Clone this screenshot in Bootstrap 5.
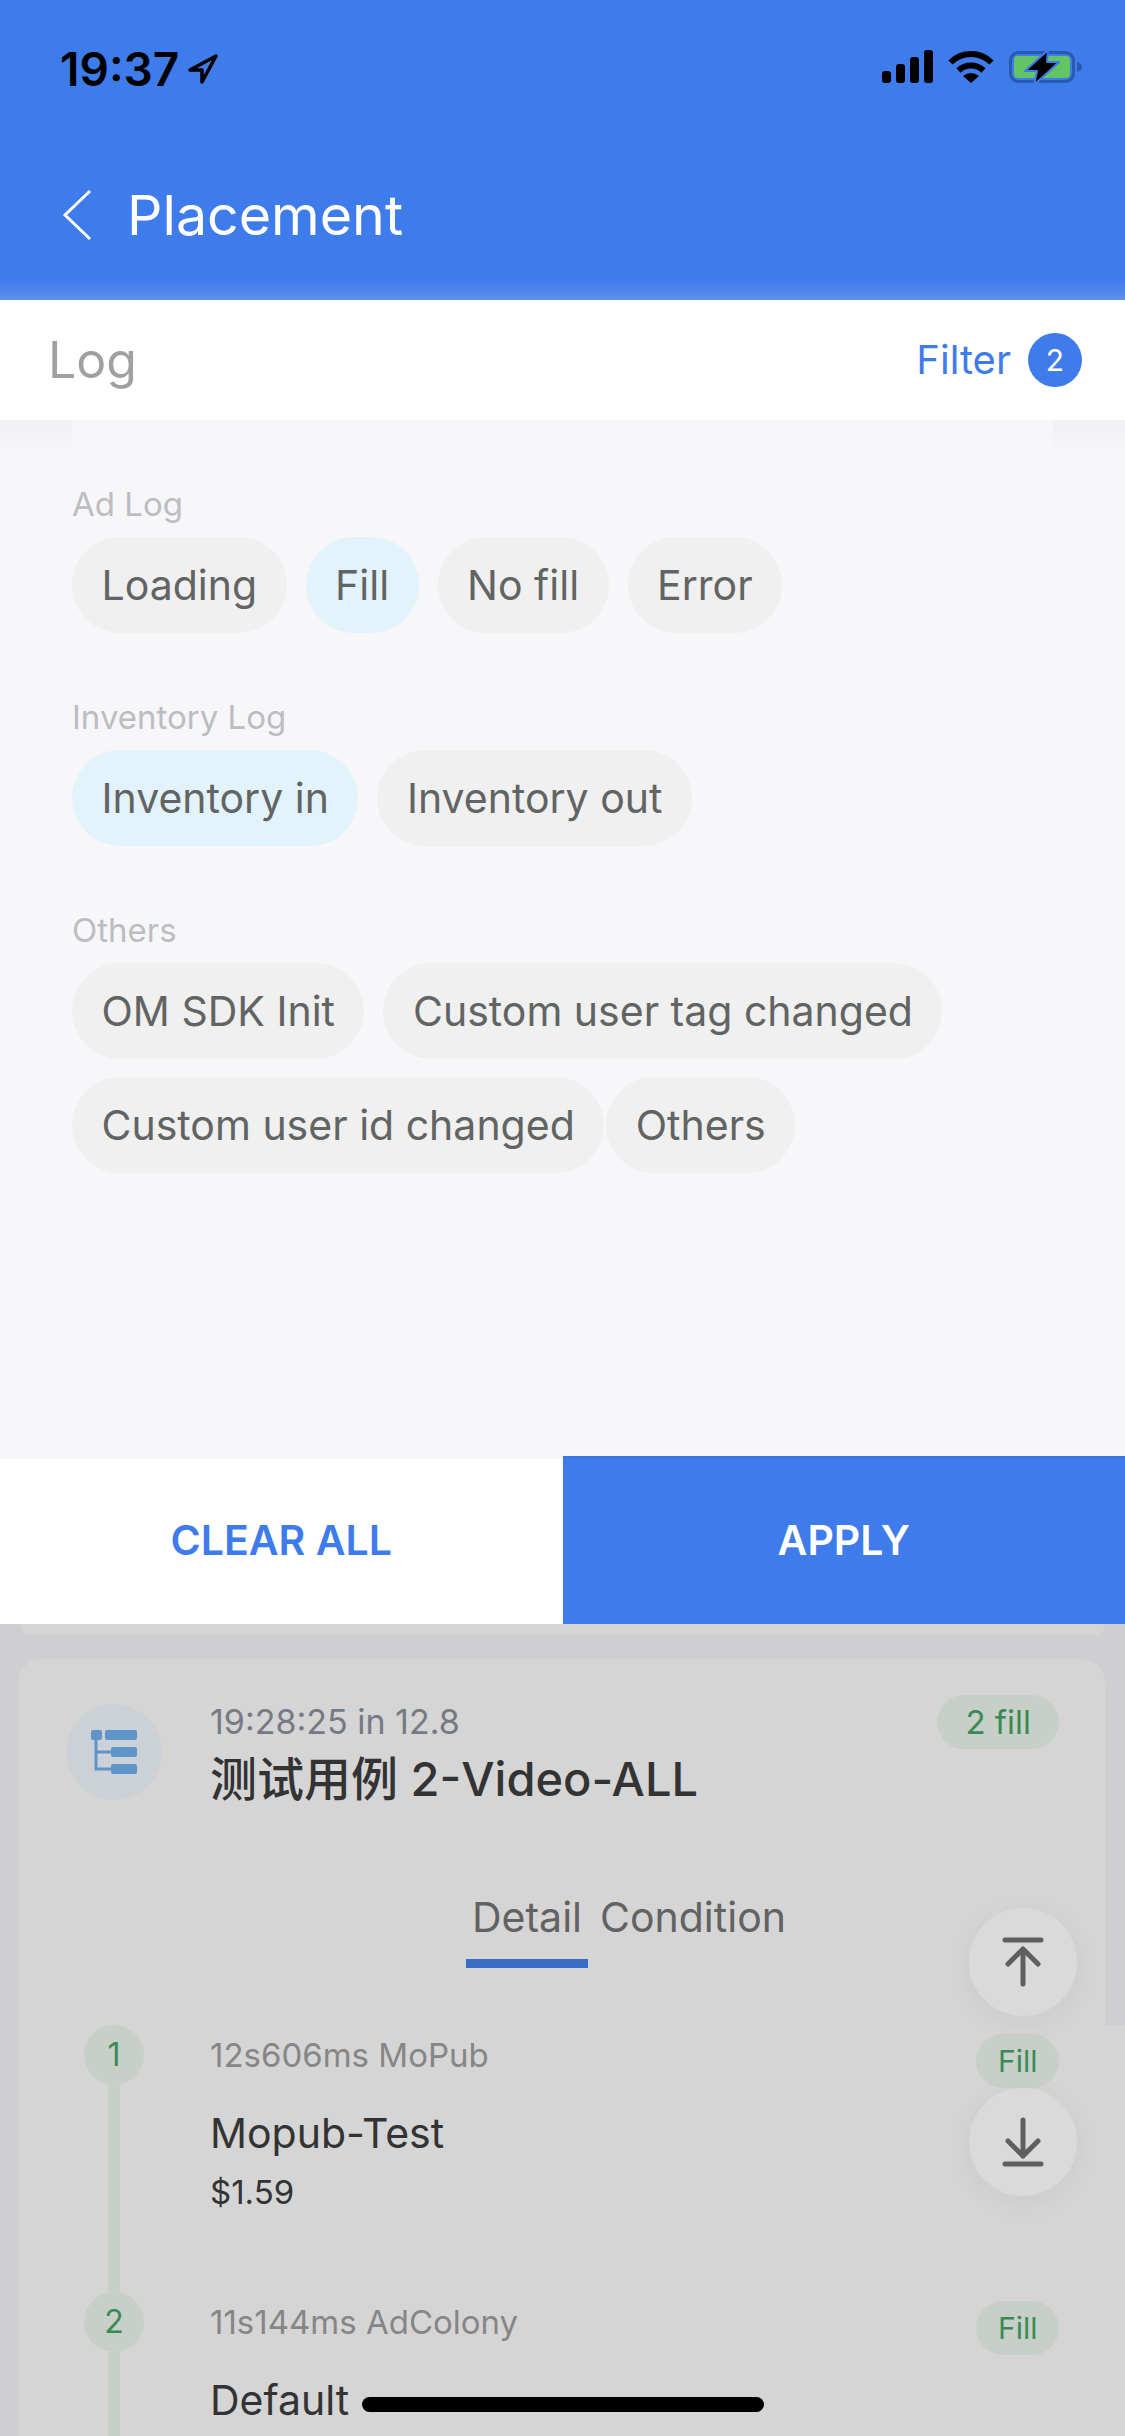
<!DOCTYPE html>
<html lang="en">
<head>
    <meta charset="UTF-8">
    <meta name="viewport" content="width=device-width, initial-scale=1.0">
    <title>Placement</title>
    <link href="https://cdn.jsdelivr.net/npm/bootstrap@5.3.0/dist/css/bootstrap.min.css" rel="stylesheet">
    <style>
        body { width: 1125px; height: 2436px; overflow: hidden; font-family: Inter, "Noto Sans CJK SC", sans-serif; background: #cfcfd1; }
        .app-head { height: 300px; background: linear-gradient(#3e7beb 280px, #5f90e8 300px); }
        .status-bar { height: 177px; padding: 46px 42px 0 60px; }
        .clock { font-size: 46px; line-height: 46px; font-weight: 600; color: #000; }
        .signal-icon { margin-right: 14px; }
        .wifi-icon { margin-right: 15px; }
        .head-nav { padding-left: 62px; gap: 35px; }
        .head-title { font-size: 55.500px; line-height: 76px; color: #fff; }
        .log-row { height: 120px; background: #fff; padding: 0 43px 0 48px; }
        .log-title { font-size: 50px; color: #a0a0a0; }
        .filter-link { font-size: 40px; color: #3e7beb; }
        .filter-count { width: 54px; height: 54px; margin-left: 17px; background: #3e7beb; color: #fff; font-size: 30px; }
        .filter-panel { height: 1036px; padding: 66px 72px 0; background:
            linear-gradient(#f1f1f4, #f7f7f9) left top / 72px 36px no-repeat,
            linear-gradient(#f1f1f4, #f7f7f9) right top / 72px 36px no-repeat,
            #f7f7f9; }
        .group-label { font-size: 33px; line-height: 36px; color: #bcbdc0; margin-bottom: 15px; }
        .chip-group { margin-bottom: 66px; }
        .chip-wrap { row-gap: 18px; column-gap: 19px; }
        .chip-item { height: 96px; padding: 2px 29.500px 0; border-radius: 48px; background: #eff0ef; color: #626463; font-size: 41px; }
        .chip-item.is-on { background: #e2f3fc; }
        .chip-tight { margin-right: -17px; }
        .panel-actions { height: 168px; }
        .panel-btn { width: 50%; border: 0; border-radius: 0; padding-top: 8px; font-size: 41px; font-weight: 600; box-shadow: inset 0 3px rgba(0,0,0,.04); }
        .btn-clear { background: #fff; color: #3e7beb; }
        .btn-apply { background: #3e7beb; color: #fff; }
        .log-under { height: 812px; overflow: hidden; padding: 0 20px 0 18px; background: linear-gradient(#d5d5d5, #d5d5d5) right bottom / 20px 411px no-repeat, #cfcfd1; }
        .prev-card { height: 11px; margin: 0 0 24px 2px; background: #d5d5d5; border-radius: 0 0 24px 24px; }
        .test-card { height: 777px; overflow: hidden; padding: 36px 46px 0 48px; background: #d5d5d5; border-radius: 24px 24px 0 0; }
        .tree-icon { width: 96px; height: 96px; margin-top: 9px; margin-right: 48px; }
        .test-time { font-size: 34px; line-height: 36px; color: #757a84; margin-top: 9px; }
        .test-name { font-size: 47px; line-height: 56px; font-weight: 500; color: #333; margin-top: 11px; white-space: nowrap; }
        .fill-tag { height: 54px; padding: 0 28px; border-radius: 27px; background: #c8cfc9; color: #3a8a54; font-size: 33px; line-height: 54px; }
        .tab-bar { margin-top: 87px; margin-left: 400px; gap: 6px; height: 74px; }
        .tab-item { font-size: 41px; line-height: 46px; color: #626262; padding: 0 6px; height: 74px; }
        .tab-item.is-on { border-bottom: 9px solid #3b6cc4; }
        .step-list { margin-top: 57px; margin-left: 18px; }
        .step-row { height: 267px; }
        .step-side { width: 60px; margin-right: 66px; }
        .step-num { width: 60px; height: 60px; background: #c8cfc9; color: #3a8a54; font-size: 32px; }
        .step-line { width: 12px; flex: 1; background: #c8cfc9; }
        .step-body { padding-top: 12px; }
        .step-meta { font-size: 33px; line-height: 36px; color: #868686; }
        .step-name { font-size: 41px; line-height: 50px; color: #333; margin-top: 35px; }
        .step-price { font-size: 33px; line-height: 36px; color: #333; margin-top: 16px; }
        .step-tag { margin-top: 9px; padding: 0 21.500px; font-size: 30px; }
        .float-btn { width: 108px; height: 108px; right: 48px; background: #dadada; box-shadow: 0 6px 30px rgba(0,0,0,.05); }
        .float-up { top: 1908px; }
        .float-down { top: 2088px; }
        .home-bar { left: 362px; top: 2397px; width: 402px; height: 15px; border-radius: 8px; background: #000; }
    </style>
</head>
<body class="position-relative">
    <header class="app-head">
        <div class="status-bar d-flex justify-content-between align-items-start">
            <div class="d-flex align-items-center gap-2">
                <span class="clock">19:37</span>
                <svg width="32" height="32" viewBox="0 0 32 32"><path d="M29 3 L3 17 H15 V29 Z" fill="none" stroke="#000" stroke-width="3.500" stroke-linejoin="round"/></svg>
            </div>
            <div class="d-flex align-items-start">
                <svg width="52" height="33" viewBox="0 0 52 33" class="signal-icon mt-1"><rect x="0" y="21" width="9" height="12" rx="3"/><rect x="14" y="14" width="9" height="19" rx="3"/><rect x="28" y="7" width="9" height="26" rx="3"/><rect x="42" y="0" width="9" height="33" rx="3"/></svg>
                <svg width="46" height="34" viewBox="0 0 46 34" class="wifi-icon mt-1"><path d="M2.500 12.500 A29 29 0 0 1 43.500 12.500" fill="none" stroke="#000" stroke-width="6"/><path d="M10.500 20.500 A18 18 0 0 1 35.500 20.500" fill="none" stroke="#000" stroke-width="6"/><path d="M23 33 L15 26 Q23 20 31 26 Z"/></svg>
                <svg width="74" height="35" viewBox="0 0 74 35" class="mt-1"><rect x="1.500" y="2.500" width="63" height="29" rx="8" fill="none" stroke="#2a5ab0" stroke-width="3"/><rect x="5" y="6" width="56" height="22" rx="4" fill="#63c466"/><path d="M68 12 Q73 13 73 17 Q73 21 68 22 Z" fill="#2a5ab0"/><path d="M39 0 L16 21 H28 L25 35 L50 12 H38 Z" stroke="#3e7beb" stroke-width="2" stroke-linejoin="round"/></svg>
            </div>
        </div>
        <nav class="head-nav d-flex align-items-center">
            <svg width="30" height="52" viewBox="0 0 30 52"><path d="M28 2 L3 26 L28 50" fill="none" stroke="#fff" stroke-width="3"/></svg>
            <span class="head-title">Placement</span>
        </nav>
    </header>

    <div class="log-row d-flex justify-content-between align-items-center">
        <span class="log-title">Log</span>
        <div class="d-flex align-items-center">
            <span class="filter-link">Filter</span>
            <span class="filter-count rounded-circle d-flex align-items-center justify-content-center">2</span>
        </div>
    </div>

    <section class="filter-panel">
        <div class="chip-group">
            <div class="group-label">Ad Log</div>
            <div class="chip-wrap d-flex flex-wrap">
                <span class="chip-item d-flex align-items-center">Loading</span>
                <span class="chip-item is-on d-flex align-items-center">Fill</span>
                <span class="chip-item d-flex align-items-center">No fill</span>
                <span class="chip-item d-flex align-items-center">Error</span>
            </div>
        </div>
        <div class="chip-group">
            <div class="group-label">Inventory Log</div>
            <div class="chip-wrap d-flex flex-wrap">
                <span class="chip-item is-on d-flex align-items-center">Inventory in</span>
                <span class="chip-item d-flex align-items-center">Inventory out</span>
            </div>
        </div>
        <div class="chip-group">
            <div class="group-label">Others</div>
            <div class="chip-wrap d-flex flex-wrap">
                <span class="chip-item d-flex align-items-center">OM SDK Init</span>
                <span class="chip-item d-flex align-items-center">Custom user tag changed</span>
                <span class="chip-item chip-tight d-flex align-items-center">Custom user id changed</span>
                <span class="chip-item d-flex align-items-center">Others</span>
            </div>
        </div>
    </section>

    <div class="panel-actions d-flex">
        <button type="button" class="btn panel-btn btn-clear">CLEAR ALL</button>
        <button type="button" class="btn panel-btn btn-apply">APPLY</button>
    </div>

    <div class="log-under">
        <div class="prev-card"></div>
        <article class="test-card">
            <div class="d-flex align-items-start">
                <svg class="tree-icon flex-shrink-0" viewBox="0 0 96 96">
                    <circle cx="48" cy="48" r="48" fill="#cbd1d7"/>
                    <g fill="#5f94c9"><rect x="25" y="26" width="11" height="10" rx="2"/><rect x="39" y="26" width="32" height="10" rx="2"/><rect x="45" y="43" width="26" height="10" rx="2"/><rect x="45" y="60" width="26" height="10" rx="2"/></g>
                    <path d="M30 34 V65 H46 M30 48 H46" fill="none" stroke="#5f94c9" stroke-width="3"/>
                </svg>
                <div class="flex-grow-1">
                    <div class="test-time">19:28:25 in 12.8</div>
                    <div class="test-name">测试用例 2-Video-ALL</div>
                </div>
                <span class="fill-tag">2 fill</span>
            </div>
            <div class="tab-bar d-flex">
                <span class="tab-item is-on">Detail</span>
                <span class="tab-item">Condition</span>
            </div>
            <div class="step-list">
                <div class="step-row d-flex">
                    <div class="step-side d-flex flex-column align-items-center flex-shrink-0">
                        <span class="step-num rounded-circle d-flex align-items-center justify-content-center">1</span>
                        <span class="step-line"></span>
                    </div>
                    <div class="step-body flex-grow-1">
                        <div class="step-meta">12s606ms MoPub</div>
                        <div class="step-name">Mopub-Test</div>
                        <div class="step-price">$1.59</div>
                    </div>
                    <span class="fill-tag step-tag">Fill</span>
                </div>
                <div class="step-row d-flex">
                    <div class="step-side d-flex flex-column align-items-center flex-shrink-0">
                        <span class="step-num rounded-circle d-flex align-items-center justify-content-center">2</span>
                        <span class="step-line"></span>
                    </div>
                    <div class="step-body flex-grow-1">
                        <div class="step-meta">11s144ms AdColony</div>
                        <div class="step-name">Default</div>
                    </div>
                    <span class="fill-tag step-tag">Fill</span>
                </div>
            </div>
        </article>
    </div>

    <div class="float-btn float-up rounded-circle position-absolute">
        <svg width="108" height="108" viewBox="0 0 108 108"><path d="M36 32 H72 M54 42 V76 M39 56 L54 41 L69 56" fill="none" stroke="#5f5f5f" stroke-width="5" stroke-linecap="round" stroke-linejoin="round"/></svg>
    </div>
    <div class="float-btn float-down rounded-circle position-absolute">
        <svg width="108" height="108" viewBox="0 0 108 108"><path d="M36 76 H72 M54 32 V68 M39 53 L54 68 L69 53" fill="none" stroke="#5f5f5f" stroke-width="5" stroke-linecap="round" stroke-linejoin="round"/></svg>
    </div>
    <div class="home-bar position-absolute"></div>

    <script src="https://cdn.jsdelivr.net/npm/bootstrap@5.3.0/dist/js/bootstrap.bundle.min.js"></script>
</body>
</html>
